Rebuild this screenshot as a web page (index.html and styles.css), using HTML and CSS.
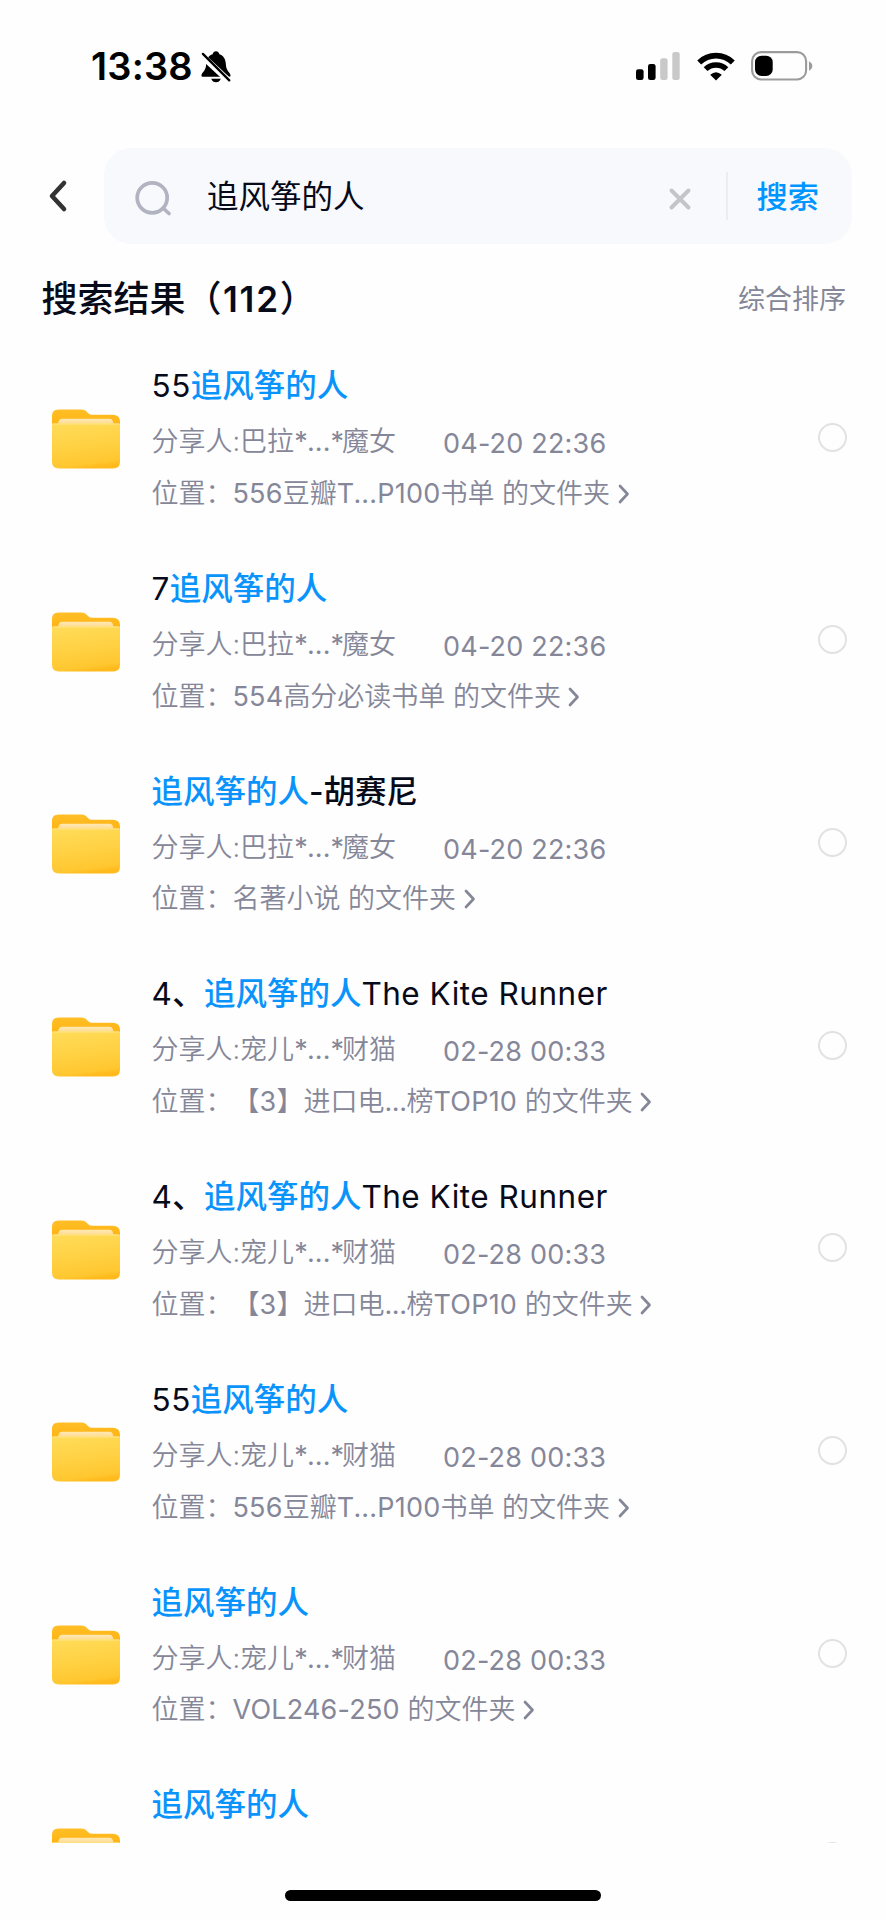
FILE: index.html
```
<!DOCTYPE html>
<html lang="zh-CN">
<head>
<meta charset="utf-8">
<title>搜索结果</title>
<link rel="stylesheet" href="styles.css">
</head>
<body>
<svg class="defs" width="0" height="0" aria-hidden="true">
  <defs>
    <linearGradient id="back" x1="0" y1="0" x2="0" y2="1"><stop offset="0" stop-color="#ffbf26"/><stop offset="1" stop-color="#ffb00f"/></linearGradient>
    <linearGradient id="paper" x1="0" y1="0" x2="0" y2="1"><stop offset="0" stop-color="#ffe9b4"/><stop offset="1" stop-color="#ffd88a"/></linearGradient>
    <linearGradient id="front" x1="0.3" y1="0" x2="0.5" y2="1"><stop offset="0" stop-color="#ffdb57"/><stop offset=".5" stop-color="#ffd143"/><stop offset=".9" stop-color="#ffc730"/><stop offset="1" stop-color="#ffba1c"/></linearGradient>
    <symbol id="folder" viewBox="0 0 68 60">
      <path d="M0 20V6.500Q0 .5 6.500 .5H29.500Q32.500 .5 34.500 2.500L36.500 4.500Q37.800 5.700 40 5.700H60.500Q68 5.700 68 13V20Z" fill="url(#back)"/>
      <path d="M5.500 16L6.800 12Q7.500 9.800 10 9.800H57.500Q60 9.800 60.700 12L62 16Z" fill="url(#paper)"/>
      <path d="M0 14.600H68V52.500Q68 59.500 61 59.500H7Q0 59.500 0 52.500Z" fill="url(#front)"/>
      <path d="M1 15H67" stroke="#ffe68c" stroke-width="1"/>
    </symbol>
    <symbol id="more" viewBox="0 0 12 20"><path d="M2 2L9.500 10L2 18" fill="none" stroke="#858799" stroke-width="2.700" stroke-linecap="round" stroke-linejoin="round"/></symbol>
  </defs>
</svg>
<div class="phone">
  <header class="status">
    <span class="clock">13:38</span>
    <svg class="bell" viewBox="0 0 30 33">
      <path d="M0 25.500C0 22 4.500 21.500 4.800 14C5 8 7.500 4.500 11.500 3.300C12 1.500 13.300.3 15 .3S18 1.500 18.500 3.300C22.500 4.500 25 8 25.200 14C25.500 21.500 30 22 30 25.500Q30 26.500 28.800 26.500H1.200Q0 26.500 0 25.500Z"/>
      <path d="M10 28.600H20Q18.500 32.300 15 32.300T10 28.600Z"/>
      <path d="M-.5 4L29.500 32" stroke="#fff" stroke-width="6.400"/>
      <path d="M1.500 3L28.700 30.300" stroke="#000" stroke-width="2.400" stroke-linecap="round"/>
    </svg>
    <div class="indicators">
      <svg class="signal" viewBox="0 0 45 30"><rect y="17.200" width="7.600" height="10.900" rx="2.300"/><rect x="12" y="12" width="7.600" height="16.100" rx="2.300"/><rect x="24.200" y="6.200" width="7.400" height="21.900" rx="2.300" fill="#c9c9c9"/><rect x="36.300" y="0" width="7.400" height="28.100" rx="2.300" fill="#c9c9c9"/></svg>
      <svg class="wifi" viewBox="0 0 38 29"><path d="M2.200 10.500A24 24 0 0 1 35.800 10.500" fill="none" stroke="#000" stroke-width="5.600"/><path d="M8.600 17.200A14.800 14.800 0 0 1 29.400 17.200" fill="none" stroke="#000" stroke-width="5.400"/><path d="M19 28.500L13.200 22.700Q19 17.700 24.800 22.700Z"/></svg>
      <svg class="battery" viewBox="0 0 62 30"><rect x="1.100" y="1.100" width="54" height="27.400" rx="9" fill="none" stroke="#9b9b9b" stroke-width="2.100"/><rect x="4" y="4.700" width="17.700" height="20.200" rx="6.500"/><path d="M58 10.300Q61.300 12 61.300 15T58 19.700Z" fill="#9b9b9b"/></svg>
    </div>
  </header>
  <nav class="searchbar">
    <svg class="backicon" viewBox="0 0 18 32"><path d="M15 3L3 16L15 29" fill="none" stroke="#333" stroke-width="4.600" stroke-linecap="round" stroke-linejoin="round"/></svg>
    <div class="field">
      <svg class="glass" viewBox="0 0 36 36"><circle cx="17.200" cy="17.800" r="15" fill="none" stroke="#b1b3c1" stroke-width="3.700"/><path d="M28.500 28.500L34 33.500" stroke="#b1b3c1" stroke-width="3.700" stroke-linecap="round"/></svg>
      <span class="query">追风筝的人</span>
      <svg class="clear" viewBox="0 0 22 22"><path d="M2.500 2.500L19.500 19.500M19.500 2.500L2.500 19.500" stroke="#c4c5c8" stroke-width="4" stroke-linecap="round"/></svg>
      <i class="divider"></i>
      <span class="submit">搜索</span>
    </div>
  </nav>
  <section class="heading"><h1>搜索结果（<b>112</b>）</h1><span class="sort">综合排序</span></section>
  <main class="list">
    <article class="row"><svg class="folder"><use href="#folder"/></svg><div class="info"><h2><span class="latin">55</span><em>追风筝的人</em></h2><p class="meta"><span class="owner">分享人:巴拉<span class="star">*</span><span class="dots">...</span><span class="star">*</span>魔女</span><time>04-20 22:36</time></p><p class="place">位置：<span class="num">556</span>豆瓣<span class="num">T...P100</span>书单&nbsp;的文件夹<svg class="more"><use href="#more"/></svg></p></div><i class="check"></i></article>
    <article class="row"><svg class="folder"><use href="#folder"/></svg><div class="info"><h2><span class="latin">7</span><em>追风筝的人</em></h2><p class="meta"><span class="owner">分享人:巴拉<span class="star">*</span><span class="dots">...</span><span class="star">*</span>魔女</span><time>04-20 22:36</time></p><p class="place">位置：<span class="num">554</span>高分必读书单&nbsp;的文件夹<svg class="more"><use href="#more"/></svg></p></div><i class="check"></i></article>
    <article class="row"><svg class="folder"><use href="#folder"/></svg><div class="info"><h2><em>追风筝的人</em>-胡赛尼</h2><p class="meta"><span class="owner">分享人:巴拉<span class="star">*</span><span class="dots">...</span><span class="star">*</span>魔女</span><time>04-20 22:36</time></p><p class="place">位置：名著小说&nbsp;的文件夹<svg class="more"><use href="#more"/></svg></p></div><i class="check"></i></article>
    <article class="row"><svg class="folder"><use href="#folder"/></svg><div class="info"><h2><span class="latin">4</span>、<em>追风筝的人</em><span class="latin">The Kite Runner</span></h2><p class="meta"><span class="owner">分享人:宠儿<span class="star">*</span><span class="dots">...</span><span class="star">*</span>财猫</span><time>02-28 00:33</time></p><p class="place">位置：【<span class="num">3</span>】进口电<span class="tight">...</span>榜<span class="num">TOP10</span>&nbsp;的文件夹<svg class="more"><use href="#more"/></svg></p></div><i class="check"></i></article>
    <article class="row"><svg class="folder"><use href="#folder"/></svg><div class="info"><h2><span class="latin">4</span>、<em>追风筝的人</em><span class="latin">The Kite Runner</span></h2><p class="meta"><span class="owner">分享人:宠儿<span class="star">*</span><span class="dots">...</span><span class="star">*</span>财猫</span><time>02-28 00:33</time></p><p class="place">位置：【<span class="num">3</span>】进口电<span class="tight">...</span>榜<span class="num">TOP10</span>&nbsp;的文件夹<svg class="more"><use href="#more"/></svg></p></div><i class="check"></i></article>
    <article class="row"><svg class="folder"><use href="#folder"/></svg><div class="info"><h2><span class="latin">55</span><em>追风筝的人</em></h2><p class="meta"><span class="owner">分享人:宠儿<span class="star">*</span><span class="dots">...</span><span class="star">*</span>财猫</span><time>02-28 00:33</time></p><p class="place">位置：<span class="num">556</span>豆瓣<span class="num">T...P100</span>书单&nbsp;的文件夹<svg class="more"><use href="#more"/></svg></p></div><i class="check"></i></article>
    <article class="row"><svg class="folder"><use href="#folder"/></svg><div class="info"><h2><em>追风筝的人</em></h2><p class="meta"><span class="owner">分享人:宠儿<span class="star">*</span><span class="dots">...</span><span class="star">*</span>财猫</span><time>02-28 00:33</time></p><p class="place">位置：<span class="num">VOL246-250</span>&nbsp;的文件夹<svg class="more"><use href="#more"/></svg></p></div><i class="check"></i></article>
    <article class="row"><svg class="folder"><use href="#folder"/></svg><div class="info"><h2><em>追风筝的人</em></h2></div><i class="check"></i></article>
  </main>
  <footer class="home"><i class="handle"></i></footer>
</div>
</body>
</html>
```
FILE: styles.css
```
* { box-sizing: border-box; margin: 0; padding: 0; }
body { background: #fefefe; font-family: Inter, "Noto Sans CJK SC", sans-serif; color: #070a19; text-spacing-trim: space-all; }
svg { display: block; flex: none; overflow: visible; }
.defs { position: absolute; }
.phone { width: 886px; height: 1920px; display: flex; flex-direction: column; overflow: hidden; white-space: nowrap; }
.status { height: 148px; flex: none; display: flex; align-items: flex-start; padding: 51px 73px 0 91px; color: #000; }
.clock { width: 110px; font-size: 38px; line-height: 31px; font-weight: 600; letter-spacing: 0.2px; }
.bell { width: 30px; height: 32px; margin-top: -0.5px; }
.indicators { margin-left: auto; display: flex; align-items: flex-start; }
.signal { width: 45px; height: 30px; margin-top: 1px; }
.wifi { width: 38px; height: 29px; margin: 0.5px 16.500px 0 16px; }
.battery { width: 62px; height: 30px; }
.searchbar { height: 96px; flex: none; display: flex; align-items: center; padding: 0 34px 0 49px; }
.backicon { width: 18px; height: 32px; margin-right: 37px; }
.field { flex: 1; height: 96px; border-radius: 27px; background: #f7f9fd; display: flex; align-items: center; padding-left: 31px; }
.glass { width: 36px; height: 36px; margin-top: 3px; }
.query { margin: 1px 0 0 36px; font-size: 31.5px; line-height: 40px; }
.clear { width: 22px; height: 22px; margin: 5px 35.500px 0 auto; }
.divider { width: 2px; height: 48px; background: #ebedf1; }
.submit { margin: 1px 33px 0 28.500px; font-size: 31.2px; line-height: 40px; font-weight: 500; color: #0095ff; }
.heading { height: 108px; flex: none; display: flex; justify-content: space-between; align-items: center; padding: 1px 40px 0 41.500px; }
.heading h1 { font-size: 36px; line-height: 50px; font-weight: 500; }
.heading b { font-weight: 600; font-size: 35px; letter-spacing: 1.8px; margin-left: 1.500px; }
.sort { margin-top: 2px; font-size: 27px; line-height: 40px; color: #858799; }
.list { height: 1491px; flex: none; overflow: hidden; }
.row { height: 202.7px; display: flex; align-items: flex-start; padding: 12px 39.500px 0 52px; }
.folder { width: 68px; height: 60px; margin-top: 45px; }
.info { flex: 1; margin: 1.400px 0 0 31.500px; }
.row h2 { height: 42px; font-size: 31.5px; line-height: 42px; font-weight: 500; }
.row em { font-style: normal; color: #0a94fb; }
.row .latin { font-weight: 400; letter-spacing: 0.5px; }
.meta, .place { display: flex; align-items: center; font-size: 27px; font-weight: 350; color: #858799; line-height: 40px; height: 40px; }
.meta { margin-top: 15px; }
.place { margin-top: 11.700px; }
.owner { width: 291.500px; }
.star { font-weight: 400; letter-spacing: -2.200px; }
.dots { margin-left: 1.500px; font-weight: 400; letter-spacing: 0.1px; }
.num { font-weight: 400; letter-spacing: 0.2px; }
.tight { font-weight: 400; letter-spacing: -0.4px; }
time { padding-top: 4px; font-weight: 400; letter-spacing: 0.2px; }
.more { width: 12px; height: 20px; margin-left: 7.500px; }
.check { width: 29px; height: 29px; margin-top: 58.700px; border: 2.5px solid #e2e2e3; border-radius: 50%; }
.home { flex: 1; display: flex; justify-content: center; padding-top: 47px; }
.handle { width: 316px; height: 11px; border-radius: 6px; background: #000; }
```
